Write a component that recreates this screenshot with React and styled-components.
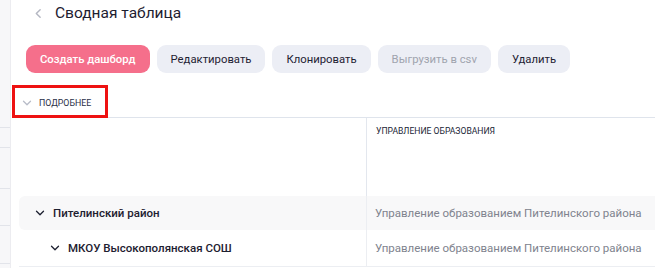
import React from "react";
import styled, { createGlobalStyle } from "styled-components";

const GlobalStyle = createGlobalStyle`
  body {
    margin: 0;
    background: #fff;
    font-family: Roboto, "Noto Sans", sans-serif;
    color: #1f2233;
  }
`;

const Page = styled.div`
  display: flex;
  width: 655px;
  height: 268px;
  overflow: hidden;
`;

const SideStrip = styled.div`
  width: 10px;
  flex-shrink: 0;
  background: #f7f7f9;
  border-right: 1px solid #ececf0;
  display: flex;
  flex-direction: column;
`;

const SideRow = styled.div`
  height: ${(p) => p.h}px;
  border-bottom: 1px solid #e2e4ea;
  flex-shrink: 0;
`;

const Main = styled.div`
  flex: 1;
  padding-left: 8px;
  display: flex;
  flex-direction: column;
  min-width: 0;
`;

const TitleRow = styled.div`
  height: 26px;
  display: flex;
  align-items: center;
  gap: 11px;
  padding-left: 14px;
`;

const BackButton = styled.span`
  display: flex;
  align-items: center;
`;

const Title = styled.h1`
  margin: 0;
  font-size: 15.5px;
  font-weight: 400;
  color: #1d2030;
`;

const Toolbar = styled.div`
  display: flex;
  gap: 7px;
  padding: 19px 0 0 7px;
`;

const Button = styled.button`
  height: 28px;
  padding: 0 14px;
  border: none;
  border-radius: 9px;
  font-family: inherit;
  font-size: 11.3px;
  font-weight: ${(p) => (p.primary ? 500 : 400)};
  background: ${(p) => (p.primary ? "#f56f8b" : "#eceef5")};
  color: ${(p) => (p.primary ? "#fff" : p.disabled ? "#a0a4ae" : "#1f2233")};
  cursor: pointer;
`;

const DetailsRow = styled.div`
  position: relative;
  margin-top: 16px;
  height: 28px;
  display: flex;
  align-items: center;
  gap: 7px;
  padding-left: 3px;
  border-bottom: 1px solid #dfe4ec;
`;

const DetailsLabel = styled.span`
  font-size: 8.8px;
  color: #2a3048;
`;

const Highlight = styled.div`
  position: absolute;
  left: -7px;
  top: -4px;
  width: 90px;
  height: 27px;
  border: 3px solid #ee1111;
  pointer-events: none;
`;

const Grid = styled.div`
  display: grid;
  grid-template-columns: 347px 1fr;
`;

const HeaderCell = styled.div`
  height: 78px;
  box-sizing: border-box;
  padding: 8px 9px;
  font-size: 8.6px;
  color: #222536;
  border-left: ${(p) => (p.divided ? "1px solid #e3e7ee" : "none")};
`;

const Cell = styled.div`
  height: ${(p) => p.h}px;
  box-sizing: border-box;
  display: flex;
  align-items: center;
  gap: 8px;
  padding-left: ${(p) => p.indent}px;
  background: ${(p) => (p.shaded ? "#f8f8f9" : "#fff")};
  border-left: ${(p) => (p.divided ? "1px solid #eceef2" : "none")};
  border-bottom: ${(p) => (p.last ? "1px solid #eceef2" : "none")};
  border-radius: ${(p) => (p.rounded ? "6px 0 0 6px" : "0")};
  font-size: 11.5px;
  white-space: nowrap;
`;

const RowName = styled.span`
  font-weight: 500;
  color: #1d2030;
`;

const RowValue = styled.span`
  color: #80838e;
`;

const Chevron = ({ down, color = "#1d2030", size = 10 }) => (
  <svg width={size} height={size} viewBox="0 0 10 10" fill="none">
    {down ? (
      <path d="M1.5 3.2 5 6.7 8.5 3.2" stroke={color} strokeWidth="1.3" strokeLinecap="round" strokeLinejoin="round" />
    ) : (
      <path d="M6.5 1.5 3 5 6.5 8.5" stroke={color} strokeWidth="1.3" strokeLinecap="round" strokeLinejoin="round" />
    )}
  </svg>
);

const rows = [
  { name: "Пителинский район", value: "Управление образованием Пителинского района", indent: 16, h: 34, shaded: true },
  { name: "МКОУ Высокополянская СОШ", value: "Управление образованием Пителинского района", indent: 31, h: 37, last: true },
];

export default function App() {
  return (
    <>
      <GlobalStyle />
      <Page>
        <SideStrip>
          <SideRow h={127} />
          <SideRow h={19} />
          <SideRow h={40} />
          <SideRow h={36} />
          <SideRow h={37} />
        </SideStrip>
        <Main>
          <TitleRow>
            <BackButton>
              <Chevron color="#b4b7c2" size={11} />
            </BackButton>
            <Title>Сводная таблица</Title>
          </TitleRow>
          <Toolbar>
            <Button primary>Создать дашборд</Button>
            <Button>Редактировать</Button>
            <Button>Клонировать</Button>
            <Button disabled>Выгрузить в csv</Button>
            <Button>Удалить</Button>
          </Toolbar>
          <DetailsRow>
            <Chevron down color="#b8bcc8" />
            <DetailsLabel>ПОДРОБНЕЕ</DetailsLabel>
            <Highlight />
          </DetailsRow>
          <Grid>
            <HeaderCell />
            <HeaderCell divided>УПРАВЛЕНИЕ ОБРАЗОВАНИЯ</HeaderCell>
            {rows.map((r) => (
              <React.Fragment key={r.name}>
                <Cell h={r.h} indent={r.indent} shaded={r.shaded} last={r.last} rounded={r.shaded}>
                  <Chevron down />
                  <RowName>{r.name}</RowName>
                </Cell>
                <Cell h={r.h} indent={8} shaded={r.shaded} last={r.last} divided>
                  <RowValue>{r.value}</RowValue>
                </Cell>
              </React.Fragment>
            ))}
          </Grid>
        </Main>
      </Page>
    </>
  );
}
